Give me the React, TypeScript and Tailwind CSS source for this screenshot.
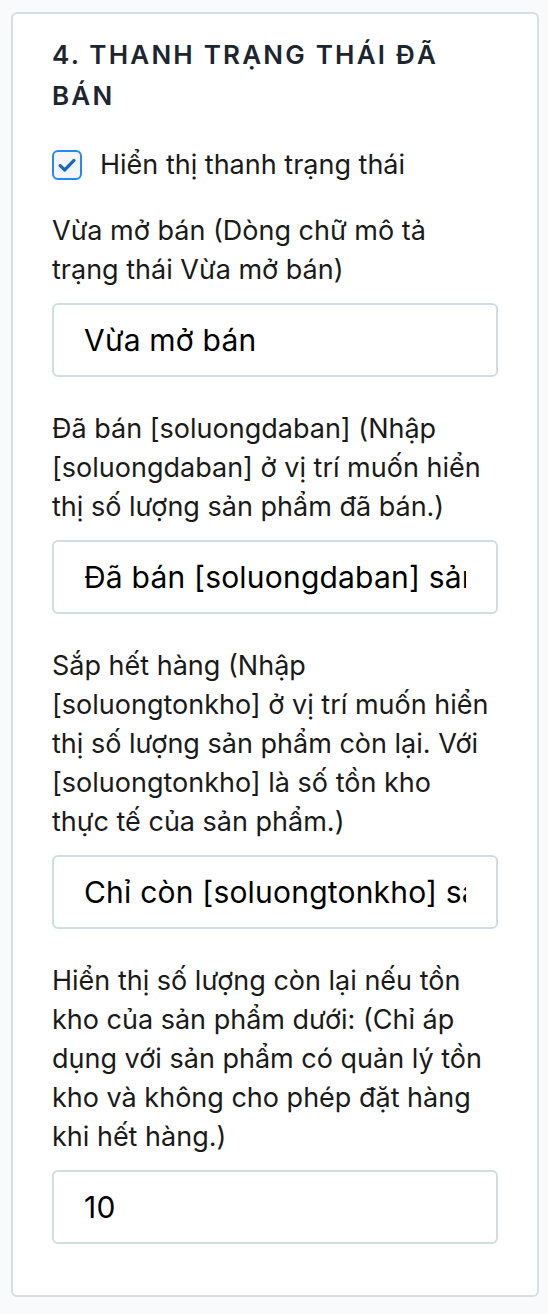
import { useState } from "react";

const fields = [
  {
    label: "Vừa mở bán (Dòng chữ mô tả trạng thái Vừa mở bán)",
    value: "Vừa mở bán",
  },
  {
    label:
      "Đã bán [soluongdaban] (Nhập [soluongdaban] ở vị trí muốn hiển thị số lượng sản phẩm đã bán.)",
    value: "Đã bán [soluongdaban] sản phẩm",
  },
  {
    label:
      "Sắp hết hàng (Nhập [soluongtonkho] ở vị trí muốn hiển thị số lượng sản phẩm còn lại. Với [soluongtonkho] là số tồn kho thực tế của sản phẩm.)",
    value: "Chỉ còn [soluongtonkho] sản phẩm",
  },
  {
    label:
      "Hiển thị số lượng còn lại nếu tồn kho của sản phẩm dưới: (Chỉ áp dụng với sản phẩm có quản lý tồn kho và không cho phép đặt hàng khi hết hàng.)",
    value: "10",
  },
];

export default function App() {
  const [showBar, setShowBar] = useState(true);

  return (
    <div className="min-h-screen bg-[#f8fafb] pl-[11px] pr-[9px] pt-3 pb-4 font-['Inter',sans-serif]">
      <div className="rounded-md border-2 border-[#d5dee4] bg-white px-[39px] pt-5 pb-[51px]">
        <h2 className="text-[26px] leading-[41px] font-semibold uppercase tracking-[2.2px] text-[#1c2530]">
          4. Thanh trạng thái đã bán
        </h2>

        <label className="mt-[29px] flex h-[39px] cursor-pointer items-center gap-[18px]">
          <span className="flex h-[30px] w-[30px] items-center justify-center rounded-[6px] border-2 border-[#2a86f2] bg-[#f3f5f7]">
            {showBar && (
              <svg viewBox="0 0 20 20" className="h-[22px] w-[22px]" fill="none">
                <path
                  d="M3.8 10.6l4.2 3.9L16.3 5.8"
                  stroke="#1768c4"
                  strokeWidth="3"
                  strokeLinecap="round"
                  strokeLinejoin="round"
                />
              </svg>
            )}
          </span>
          <input
            type="checkbox"
            className="hidden"
            checked={showBar}
            onChange={(e) => setShowBar(e.target.checked)}
          />
          <span className="text-[27px] leading-[39px] text-[#1a1a1a]">
            Hiển thị thanh trạng thái
          </span>
        </label>

        <div className="mt-[27px] flex flex-col gap-8">
          {fields.map((f) => (
            <div key={f.label} className="flex flex-col gap-[14px]">
              <p className="pr-[4px] text-[27px] leading-[39px] text-[#1a1a1a]">{f.label}</p>
              <input
                type="text"
                readOnly
                value={f.value}
                className="h-[74px] w-full rounded-[6px] border-2 border-[#d3dce3] bg-white px-[30px] text-[30px] tracking-[0.2px] text-black outline-none"
              />
            </div>
          ))}
        </div>
      </div>
    </div>
  );
}
